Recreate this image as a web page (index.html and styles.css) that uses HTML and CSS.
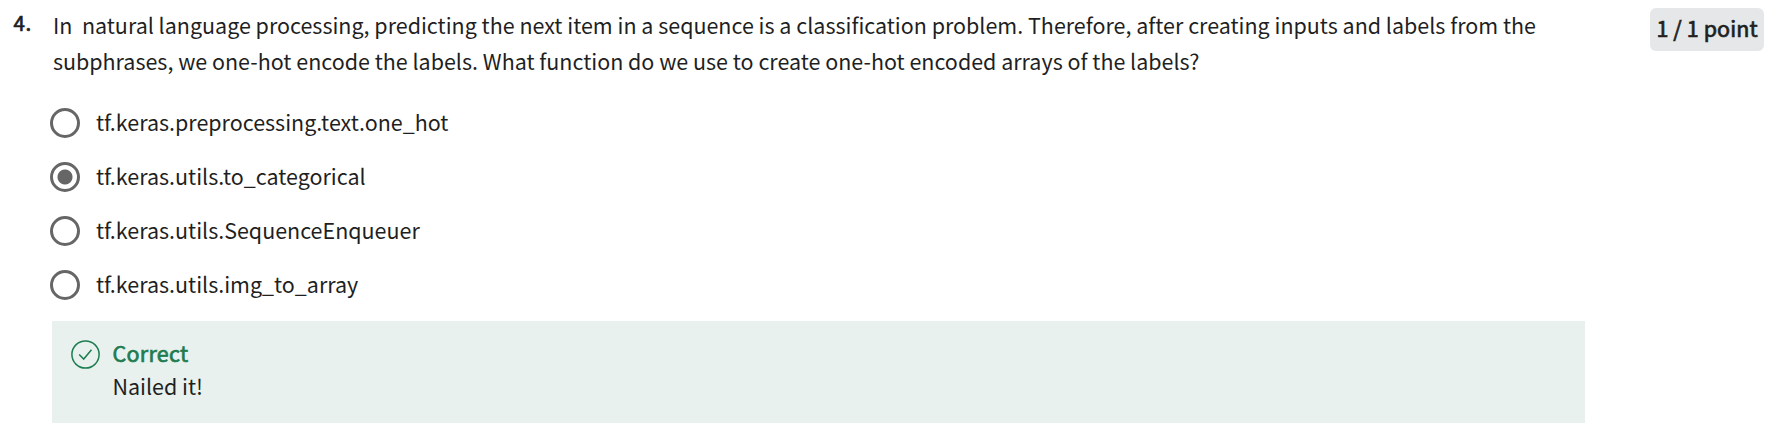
FILE: index.html
```html
<!DOCTYPE html>
<html lang="en">
<head>
<meta charset="utf-8">
<title>Quiz question</title>
<link rel="stylesheet" href="styles.css">
</head>
<body>
<main class="question">
  <div class="number">4.</div>
  <section class="content">
    <p class="prompt">In&nbsp; natural language processing, predicting the next item in a sequence is a classification problem. Therefore, after creating inputs and labels from the<br>subphrases, we one-hot encode the labels. What function do we use to create one-hot encoded arrays of the labels?</p>
    <ul class="options">
      <li class="option"><span class="radio"></span><span class="label">tf.keras.preprocessing.text.one_hot</span></li>
      <li class="option"><span class="radio checked"></span><span class="label">tf.keras.utils.to_categorical</span></li>
      <li class="option"><span class="radio"></span><span class="label">tf.keras.utils.SequenceEnqueuer</span></li>
      <li class="option"><span class="radio"></span><span class="label">tf.keras.utils.img_to_array</span></li>
    </ul>
    <div class="feedback">
      <svg class="check" viewBox="0 0 29 29" width="29" height="29"><circle cx="14.5" cy="14.5" r="13.6"/><path d="M8.2 14.5l4.5 4.6L20.5 9.8"/></svg>
      <div class="feedback-text">
        <div class="verdict">Correct</div>
        <div class="note">Nailed it!</div>
      </div>
    </div>
  </section>
  <div class="points">1 / 1 point</div>
</main>
</body>
</html>
```
FILE: styles.css
```css
body {
  margin: 0;
  background: #fff;
  color: #1f1f1f;
  font-family: "Noto Sans CJK SC", sans-serif;
  font-size: 21.48px;
}
.question {
  display: flex;
  align-items: flex-start;
  height: 448px;
  overflow: hidden;
}
.number {
  width: 38.5px;
  padding: 6px 0 0 13.5px;
  line-height: 32px;
  font-size: 20.5px;
  letter-spacing: 0.7px;
  -webkit-text-stroke: 0.7px currentColor;
}
.content { width: 1533px; }
.prompt {
  margin: 7px 0 0 0.9px;
  line-height: 36px;
  white-space: nowrap;
}
.options {
  margin: 17px 0 9px -1.5px;
  padding: 0;
  list-style: none;
}
.option {
  display: flex;
  align-items: center;
  height: 54px;
}
.radio {
  width: 30px;
  height: 30px;
  margin-left: -0.3px;
  margin-right: 15.8px;
  box-sizing: border-box;
  border: 3px solid #666;
  border-radius: 50%;
}
.label {
  padding-bottom: 3px;
}
.checked {
  background: radial-gradient(circle, #666 7px, transparent 8px);
}
.feedback {
  display: flex;
  height: 102px;
  box-sizing: border-box;
  padding: 15px 18.5px;
  background: #e8f1ee;
}
.check {
  margin: 3.5px 13px 0 0;
  fill: none;
  stroke: #1d7c50;
  stroke-width: 1.5;
}
.feedback-text { line-height: 33px; }
.verdict {
  color: #1d7c50;
  letter-spacing: 0.3px;
  -webkit-text-stroke: 0.7px currentColor;
}
.points {
  margin: 8px 0 0 65px;
  width: 114px;
  height: 43px;
  line-height: 40px;
  border-radius: 6px;
  background: #e5e7e8;
  text-align: center;
  letter-spacing: 0.1px;
  -webkit-text-stroke: 0.7px currentColor;
}
```
